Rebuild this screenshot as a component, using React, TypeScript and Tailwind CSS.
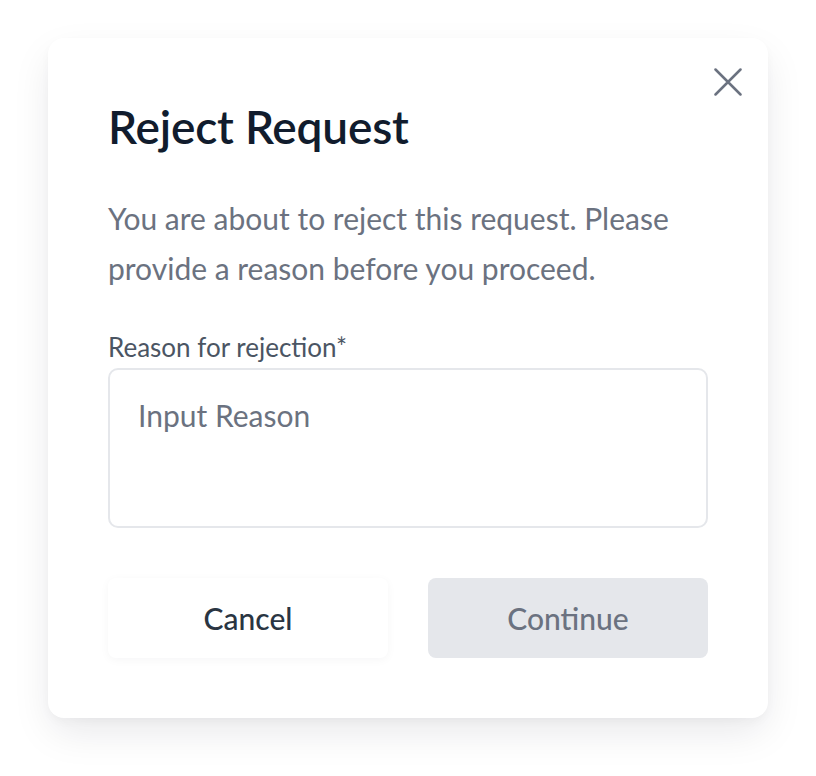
import React from "react";

export default function App() {
  return (
    <div
      className="w-[816px] h-[776px] bg-white pt-[38px] pl-[48px]"
      style={{ fontFamily: "Lato, 'Noto Sans', sans-serif" }}
    >
      <div className="relative w-[720px] h-[680px] bg-white rounded-[16px] shadow-[0_16px_40px_-4px_rgba(17,24,39,0.10),0_4px_12px_-2px_rgba(17,24,39,0.04)] px-[60px] pt-[61px]">
        <button className="absolute right-[26px] top-[30px] w-[28px] h-[28px] flex items-center justify-center">
          <svg width="28" height="28" viewBox="0 0 28 28" fill="none">
            <path d="M1.5 1.5 L26.5 26.5 M26.5 1.5 L1.5 26.5" stroke="#6b7280" strokeWidth="2.5" strokeLinecap="round" />
          </svg>
        </button>
        <h1 className="text-[46px] leading-[56px] text-[#111c2d] font-semibold tracking-[-0.2px]">Reject Request</h1>
        <p className="mt-[38px] text-[30px] leading-[50px] text-[#6b7280] w-[600px]">
          You are about to reject this request. Please provide a reason before you proceed.
        </p>
        <label className="block mt-[38px] text-[26px] leading-[32px] text-[#4b5563]">Reason for rejection*</label>
        <div className="mt-[5px] w-[600px] h-[160px] border-2 border-[#e5e7eb] rounded-[10px] px-[28px] pt-[27px]">
          <div className="text-[30px] leading-[36px] text-[#6b7280]">Input Reason</div>
        </div>
        <div className="mt-[50px] flex gap-[40px]">
          <button className="w-[280px] h-[80px] rounded-[8px] bg-white shadow-[0_2px_10px_rgba(17,24,39,0.04)] text-[30px] text-[#2a3542] font-medium flex items-center justify-center">
            Cancel
          </button>
          <button className="w-[280px] h-[80px] rounded-[8px] bg-[#e5e7eb] text-[30px] text-[#6b7280] font-medium flex items-center justify-center">
            Continue
          </button>
        </div>
      </div>
    </div>
  );
}
